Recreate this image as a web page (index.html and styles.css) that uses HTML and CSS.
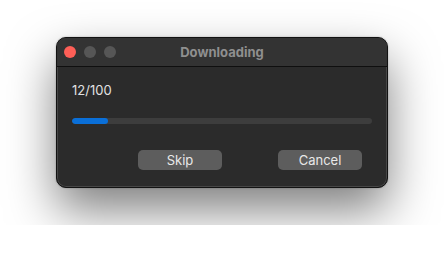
FILE: index.html
```html
<!DOCTYPE html>
<html>

<head>
  <meta charset="UTF-8" />
  <title>Downloading</title>
  <link rel="stylesheet" href="styles.css">
</head>

<body>
  <div class="window">
    <div class="titlebar">
      <div class="lights">
        <span class="light close"></span>
        <span class="light"></span>
        <span class="light"></span>
      </div>
      <div class="title">Downloading</div>
    </div>

    <div class="content">
      <div class="count">12/100</div>

      <div class="progress">
        <div class="progress-fill" style="width: 12%"></div>
      </div>

      <div class="button-group">
        <button id="skip">Skip</button>
        <button id="cancel">Cancel</button>
      </div>
    </div>
  </div>
</body>

</html>
```

FILE: styles.css
```css
body {
  font-family: Inter, "Liberation Sans", Arial, sans-serif;
  margin: 0;
  padding: 37px 56px;
  background-color: #ffffff;
}

.window {
  width: 332px;
  height: 151px;
  box-sizing: border-box;
  border: 1px solid #121212;
  border-radius: 10px;
  background-color: #2b2b2b;
  box-shadow: inset 0 0 0 1px #464646, 0 22px 48px rgba(0, 0, 0, 0.5), 0 0 2px rgba(0, 0, 0, 0.3);
  overflow: hidden;
  display: flex;
  flex-direction: column;
}

.titlebar {
  height: 28px;
  flex-shrink: 0;
  background-color: #333333;
  border-bottom: 1px solid #0f0f0f;
  display: flex;
  align-items: center;
  position: relative;
}

.lights {
  display: flex;
  gap: 8px;
  padding-left: 7px;
}

.light {
  width: 12px;
  height: 12px;
  border-radius: 50%;
  background-color: #565656;
}

.light.close {
  background-color: #fe5f57;
}

.title {
  position: absolute;
  left: 0;
  right: 0;
  text-align: center;
  font-size: 13px;
  font-weight: 700;
  color: #8f8f8f;
}

.content {
  display: flex;
  flex-direction: column;
  padding: 14px 15px 0 15px;
}

.count {
  font-size: 13px;
  color: #e2e2e2;
  line-height: 18px;
}

.progress {
  margin-top: 19px;
  height: 6px;
  border-radius: 3px;
  background-color: #3d3d3d;
  overflow: hidden;
}

.progress-fill {
  height: 100%;
  border-radius: 3px;
  background-color: #0a6fd8;
}

.button-group {
  display: flex;
  justify-content: flex-end;
  gap: 56px;
  margin-top: 26px;
  padding-right: 10px;
}

button {
  width: 84px;
  height: 20px;
  border: none;
  border-radius: 5px;
  background-color: #5d5d5d;
  color: #e8e8e8;
  font-family: inherit;
  font-size: 13px;
  padding: 0;
}
```
